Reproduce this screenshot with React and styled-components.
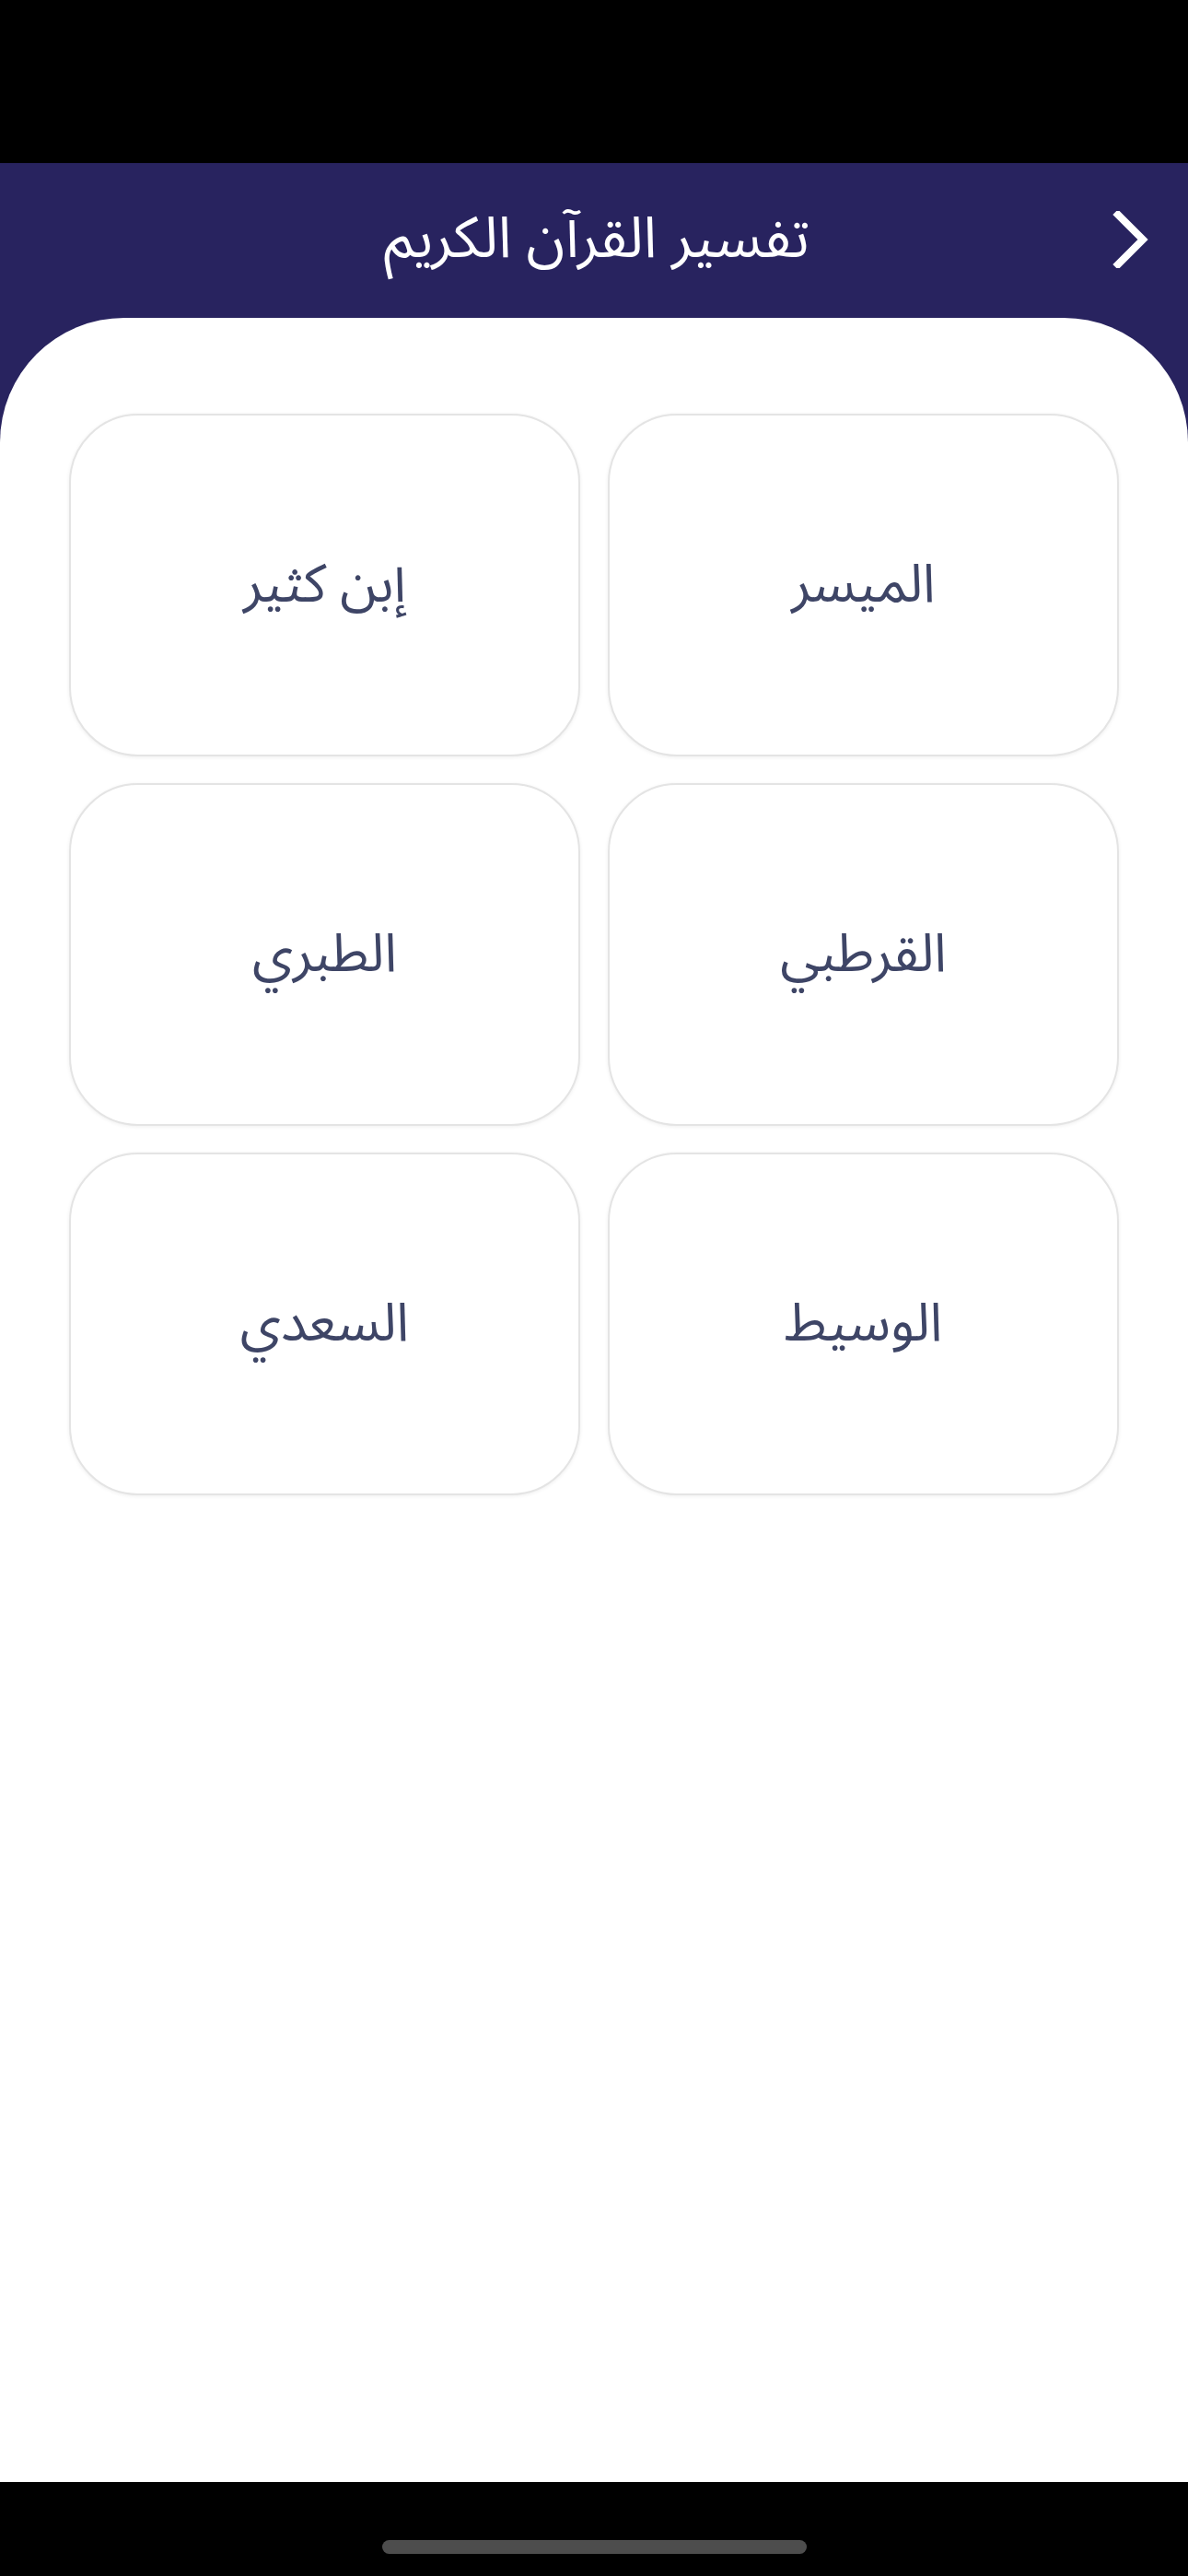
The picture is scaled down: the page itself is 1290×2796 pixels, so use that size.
import React from 'react'
import styled, { createGlobalStyle } from 'styled-components'

const tafasir = ['الميسر', 'إبن كثير', 'القرطبي', 'الطبري', 'الوسيط', 'السعدي']

function App() {
  return (
    <>
      <GlobalStyle />
      <Screen>
        <StatusBar />
        <Header>
          <span />
          <Title>تفسير القرآن الكريم</Title>
          <BackButton aria-label="رجوع">
            <svg width="40" height="62" viewBox="0 0 40 62" fill="none">
              <path d="M6 4 L33 31 L6 58" stroke="#FFFFFF" strokeWidth="8" strokeLinecap="square" strokeLinejoin="miter" />
            </svg>
          </BackButton>
        </Header>
        <Panel>
          <Grid dir="rtl">
            {tafasir.map((name) => (
              <Card key={name}>
                <CardText>{name}</CardText>
              </Card>
            ))}
          </Grid>
        </Panel>
        <HomeBar>
          <HomeIndicator />
        </HomeBar>
      </Screen>
    </>
  )
}

const GlobalStyle = createGlobalStyle`
  html, body {
    margin: 0;
    padding: 0;
    background: #000000;
  }
  * {
    box-sizing: border-box;
  }
`

const Screen = styled.div`
  width: 1290px;
  height: 2796px;
  display: flex;
  flex-direction: column;
  background-color: #28235F;
  font-family: "Noto Sans Arabic", "DejaVu Sans", sans-serif;
`

const StatusBar = styled.div`
  height: 177px;
  flex-shrink: 0;
  background-color: #000000;
`

const Header = styled.div`
  height: 168px;
  flex-shrink: 0;
  padding: 0 42px 2px 48px;
  display: grid;
  grid-template-columns: 1fr auto 1fr;
  align-items: center;
`

const Title = styled.h1`
  margin: 0;
  color: #FFFFFF;
  font-size: 62px;
  font-weight: 400;
  line-height: 1;
  white-space: nowrap;
`

const BackButton = styled.div`
  justify-self: end;
  display: flex;
  align-items: center;
  cursor: pointer;
`

const Panel = styled.div`
  flex: 1;
  background-color: #FFFFFF;
  border-radius: 135px 135px 0 0;
  padding: 104px 75px 0 75px;
`

const Grid = styled.div`
  display: grid;
  grid-template-columns: 1fr 1fr;
  gap: 29px 30px;
`

const Card = styled.div`
  height: 372px;
  border: 2px solid #E4E4E4;
  border-radius: 75px;
  background-color: #FFFFFF;
  box-shadow: 0 1px 4px rgba(0, 0, 0, 0.07);
  display: flex;
  align-items: center;
  justify-content: center;
  cursor: pointer;
`

const CardText = styled.span`
  color: #3E4566;
  font-size: 58px;
  font-weight: 400;
  line-height: 1;
`

const HomeBar = styled.div`
  height: 102px;
  flex-shrink: 0;
  background-color: #000000;
  display: flex;
  justify-content: center;
  padding-top: 63px;
`

const HomeIndicator = styled.div`
  width: 461px;
  height: 15px;
  border-radius: 8px;
  background-color: #4D4D4D;
`

export default App
